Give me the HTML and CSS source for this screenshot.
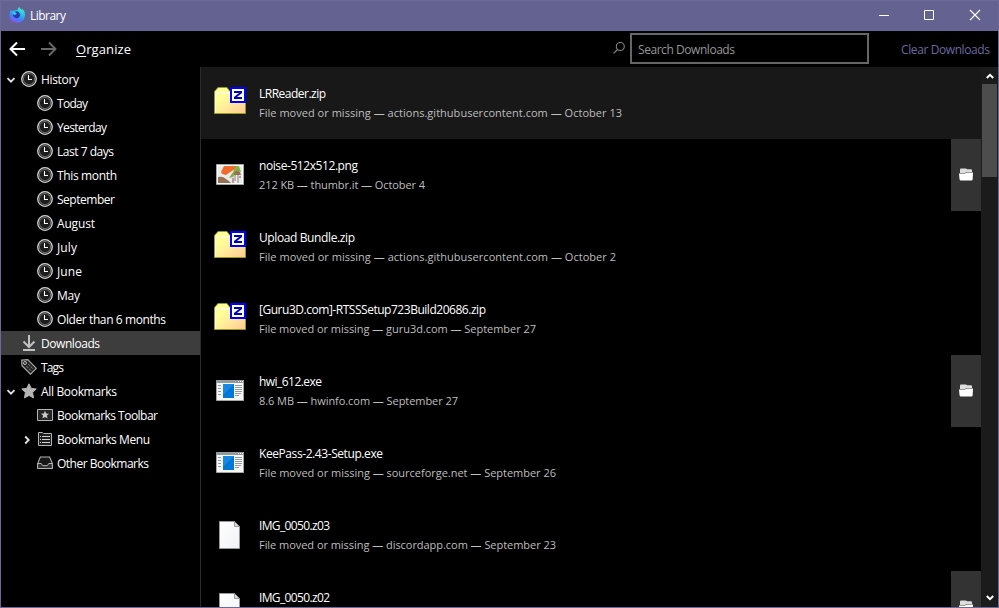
FILE: index.html
```html
<!DOCTYPE html>
<html lang="en">
<head>
<meta charset="utf-8">
<title>Library</title>
<link rel="stylesheet" href="styles.css">
</head>
<body>
<svg class="sprite" aria-hidden="true">
  <defs>
    <linearGradient id="fx" x1="0.8" y1="0" x2="0.3" y2="1"><stop offset="0" stop-color="#4df5b8"/><stop offset=".35" stop-color="#25c6ea"/><stop offset=".7" stop-color="#3b82ff"/><stop offset="1" stop-color="#a347f5"/></linearGradient>
    <linearGradient id="peach" x1="0" y1="0" x2="1" y2="1"><stop offset=".3" stop-color="#ffff98"/><stop offset=".75" stop-color="#ffdd9a"/><stop offset="1" stop-color="#ffc898"/></linearGradient>
    <linearGradient id="paper" x1="0" y1="0" x2="1" y2="1"><stop offset="0" stop-color="#fff"/><stop offset="1" stop-color="#f0f2f4"/></linearGradient>
  </defs>
  <symbol id="clock" viewBox="0 0 16 16"><circle cx="8" cy="8" r="7.3" fill="#1c1c1c" stroke="#d4d4d4" stroke-width="1.3"/><circle cx="8" cy="8" r="5.6" fill="none" stroke="#777" stroke-width=".9"/><path d="M7.5 4v4.5H11" fill="none" stroke="#fff" stroke-width="1.1"/></symbol>
  <symbol id="down" viewBox="0 0 16 16"><path d="M8 0v12M2.500 6.500l5.500 5.500 5.500-5.500M2 15h12" fill="none" stroke="#c2c2c2" stroke-width="2"/></symbol>
  <symbol id="tag" viewBox="0 0 16 16"><path d="M.7 1.2 6.8.7l8.500 8.6-5.8 5.9L1 6.8z" fill="#242424" stroke="#a8a8a8" stroke-width="1.2"/><circle cx="4" cy="4" r="1.5" fill="none" stroke="#b8b8b8"/><path d="m7.3 5.2 4.6 4.5M5.6 7.3l4.2 4.2" stroke="#999" stroke-width=".9" stroke-dasharray="2.5 1"/></symbol>
  <symbol id="star" viewBox="0 0 16 16"><path fill="#b5b5b5" stroke="#b5b5b5" stroke-linejoin="round" d="m8 .8 2.2 4.5 5 .7-3.6 3.5.9 5.4L8 12.400l-4.500 2.500.9-5.400L.8 6l5-.7z"/></symbol>
  <symbol id="toolbar" viewBox="0 0 16 16"><path fill="#242424" stroke="#b4b4b4" d="M.5 2.500h15v11H.5z"/><path fill="#c8c8c8" d="m8 3.8 1.2 2.6 2.9.3L9.9 8.6l.7 2.9L8 10l-2.6 1.5.7-2.9-2.2-1.9 2.9-.3z"/></symbol>
  <symbol id="menu" viewBox="0 0 16 16"><path fill="#202020" stroke="#b4b4b4" d="M1.5 1.5h4l1 1h8v12h-13z"/><path d="M3 5.5h1m1 0h8M3 8.5h1m1 0h8M3 11.5h1m1 0h8" stroke="#d0d0d0"/></symbol>
  <symbol id="tray" viewBox="0 0 16 16"><path d="M.7 8.4 3.4 2h9.2l2.7 6.4v5.1H.7z" fill="#171717" stroke="#b4b4b4" stroke-width="1.1"/><path d="M.7 8.5h3.5c.6 0 .7 2.2 1.7 2.2h4.2c1 0 1.1-2.2 1.7-2.2h3.5v5H.7z" fill="#303030" stroke="#b4b4b4"/></symbol>
  <symbol id="chev" viewBox="0 0 10 10"><path d="m1.5 3.2 3.5 3.5 3.5-3.5" fill="none" stroke="#e4e4e4" stroke-width="1.8"/></symbol>
  <symbol id="zip" viewBox="0 0 32 32"><path fill="url(#peach)" stroke="#989827" d="M.5 30.500V8.500L4 4.500h9l3 4h15.500v22z"/><path fill="#fff" d="M2 9h14v1H2zM1 10h1v20H1z"/><path fill="#00f" d="M16 4h16v16H16z"/><path fill="#fff" d="M18 6h12v12H18z"/><path fill="#0000c0" d="M20 8h8v2l-5 4h5v2h-8v-2l5-4h-5z"/></symbol>
  <symbol id="image" viewBox="0 0 28 21"><path fill="#fff" stroke="#a6a6a6" d="M.5.5h27v20H.5z"/><path fill="#e8ecea" d="M2 2h24v17H2z"/><path fill="#ef6c2d" d="M8 2h13l-2 3-3 2-3 2-3 2-4-1-1-2z"/><path fill="#83b347" d="M20 2h3l2 6-3-1-5 6-4 1 4-6z"/><path fill="#987052" d="M2 13q5-1 8 2 3 2 5 4H2zM18 9q2-4 6-1l1 3h-7z"/><path stroke="#b0a6a2" stroke-width="1.500" d="M19 11v6M22 11v8"/><path stroke="#a84047" d="M17 14v5M24 12v2"/></symbol>
  <symbol id="exe" viewBox="0 0 28 21"><path fill="#f7f7f7" stroke="#a6a6a6" d="M.5.5h27v20H.5z"/><path fill="#919a9e" d="M0 0h28v3H0z"/><path fill="#fff" d="M22 1h1v1h-1zm2 0h1v1h-1zm2 0h1v1h-1z"/><path fill="#0078d7" d="M7 4h11v14H7z"/><path fill="#1888e2" d="M7 4h11L7 15z"/><path d="M2 5.500h3M2 8.500h3M2 11.500h3M2 14.500h3M19 5.500h7M19 7.500h7M19 9.500h7M19 11.500h7M19 13.500h6M19 15.500h4" stroke="#929b9f"/></symbol>
  <symbol id="file" viewBox="0 0 21 28"><path fill="url(#paper)" stroke="#979a9c" d="M.5.500h15l5 5v22H.5z"/><path fill="#d8dcde" stroke="#979a9c" d="M15.500.5v5h5z"/></symbol>
  <symbol id="folder" viewBox="0 0 14 13"><path fill="#ddd" d="M1 4V1.500Q1 .5 2 .5h5l1 .8h4q1 0 1 1V4H7.500l-1.500.9H1z"/><path fill="#fff" d="M0 5.500h6L7.500 4.600H14l-.3 6.400q0 1.500-1.500 1.500H2Q.7 12.500.5 11z"/></symbol>
</svg>
<div class="window">
  <header class="titlebar">
    <svg class="logo" viewBox="0 0 16 16"><path fill="url(#fx)" d="M8.300 3Q9 1 10.200 0q1.300 2 2.800 3l.2-1.600Q16 4 16 8.300A7.800 7.600 0 0 1 .4 8Q.3 5 2 2.700L2.500 4 5 3.600z"/><path fill="#2e37a4" d="M5 5.200Q7.700 3 10 5.500q2 2.500.2 4.700Q7.800 12.500 5 10 3 7.800 5 5.200z"/><path fill="#35c7f2" d="M3.500 4.500 7 5.500Q8.500 6.600 7 7.500L5.200 8 4 7z"/></svg>
    <span class="title fit" data-w="36">Library</span>
    <svg class="controls" width="104" height="12" viewBox="0 0 104 12" fill="none" stroke="#fff"><path d="M0 6.500h10M45.500 1.500h9v9h-9z"/><path d="m91 1 10 10m0-10L91 11" stroke-width="1.200"/></svg>
  </header>
  <nav class="toolbar">
    <svg class="nav-arrow" viewBox="0 0 16 16"><path d="M16 8H1.500M8 1.500 1.500 8 8 14.500" fill="none" stroke="#fff" stroke-width="2"/></svg>
    <svg class="nav-arrow forward" viewBox="0 0 16 16"><path d="M0 8h14.500M8 1.500 14.500 8 8 14.500" fill="none" stroke="#686868" stroke-width="1.900"/></svg>
    <span class="organize fit" data-w="55"><u>O</u>rganize</span>
    <svg class="magnifier" viewBox="0 0 12 12"><circle cx="7.300" cy="4.500" r="4" fill="none" stroke="#868686" stroke-width="1.100"/><path d="M4.500 7.500.6 11.400" stroke="#868686" stroke-width="1.200"/></svg>
    <div class="search"><span class="fit" data-w="97">Search Downloads</span></div>
    <span class="clear fit" data-w="89">Clear Downloads</span>
  </nav>
  <main class="content">
    <aside class="tree">
      <div class="node"><svg class="twisty"><use href="#chev"/></svg><svg class="icon"><use href="#clock"/></svg><span class="fit" data-w="38">History</span></div>
      <div class="node child"><svg class="icon"><use href="#clock"/></svg><span class="fit" data-w="31">Today</span></div>
      <div class="node child"><svg class="icon"><use href="#clock"/></svg><span class="fit" data-w="50">Yesterday</span></div>
      <div class="node child"><svg class="icon"><use href="#clock"/></svg><span class="fit" data-w="57">Last 7 days</span></div>
      <div class="node child"><svg class="icon"><use href="#clock"/></svg><span class="fit" data-w="60">This month</span></div>
      <div class="node child"><svg class="icon"><use href="#clock"/></svg><span class="fit" data-w="58">September</span></div>
      <div class="node child"><svg class="icon"><use href="#clock"/></svg><span class="fit" data-w="38">August</span></div>
      <div class="node child"><svg class="icon"><use href="#clock"/></svg><span class="fit" data-w="20">July</span></div>
      <div class="node child"><svg class="icon"><use href="#clock"/></svg><span class="fit" data-w="25">June</span></div>
      <div class="node child"><svg class="icon"><use href="#clock"/></svg><span class="fit" data-w="23">May</span></div>
      <div class="node child"><svg class="icon"><use href="#clock"/></svg><span class="fit" data-w="109">Older than 6 months</span></div>
      <div class="node leaf selected"><svg class="icon"><use href="#down"/></svg><span class="fit" data-w="59">Downloads</span></div>
      <div class="node leaf"><svg class="icon"><use href="#tag"/></svg><span class="fit" data-w="23">Tags</span></div>
      <div class="node"><svg class="twisty"><use href="#chev"/></svg><svg class="icon"><use href="#star"/></svg><span class="fit" data-w="76">All Bookmarks</span></div>
      <div class="node child"><svg class="icon"><use href="#toolbar"/></svg><span class="fit" data-w="101">Bookmarks Toolbar</span></div>
      <div class="node nested"><svg class="twisty closed"><use href="#chev"/></svg><svg class="icon"><use href="#menu"/></svg><span class="fit" data-w="93">Bookmarks Menu</span></div>
      <div class="node child"><svg class="icon"><use href="#tray"/></svg><span class="fit" data-w="92">Other Bookmarks</span></div>
    </aside>
    <section class="downloads">
      <article class="item current"><svg class="type zip"><use href="#zip"/></svg><div class="info"><div class="name"><span class="fit" data-w="67">LRReader.zip</span></div><div class="meta"><span class="fit" data-w="363">File moved or missing — actions.githubusercontent.com — October 13</span></div></div></article>
      <article class="item"><svg class="type wide"><use href="#image"/></svg><div class="info"><div class="name"><span class="fit" data-w="99">noise-512x512.png</span></div><div class="meta"><span class="fit" data-w="166">212 KB — thumbr.it — October 4</span></div></div><div class="show"><svg><use href="#folder"/></svg></div></article>
      <article class="item"><svg class="type zip"><use href="#zip"/></svg><div class="info"><div class="name"><span class="fit" data-w="96">Upload Bundle.zip</span></div><div class="meta"><span class="fit" data-w="357">File moved or missing — actions.githubusercontent.com — October 2</span></div></div></article>
      <article class="item"><svg class="type zip"><use href="#zip"/></svg><div class="info"><div class="name"><span class="fit" data-w="227">[Guru3D.com]-RTSSSetup723Build20686.zip</span></div><div class="meta"><span class="fit" data-w="277">File moved or missing — guru3d.com — September 27</span></div></div></article>
      <article class="item"><svg class="type wide"><use href="#exe"/></svg><div class="info"><div class="name"><span class="fit" data-w="63">hwi_612.exe</span></div><div class="meta"><span class="fit" data-w="199">8.6 MB — hwinfo.com — September 27</span></div></div><div class="show"><svg><use href="#folder"/></svg></div></article>
      <article class="item"><svg class="type wide"><use href="#exe"/></svg><div class="info"><div class="name"><span class="fit" data-w="124">KeePass-2.43-Setup.exe</span></div><div class="meta"><span class="fit" data-w="297">File moved or missing — sourceforge.net — September 26</span></div></div></article>
      <article class="item"><svg class="type tall"><use href="#file"/></svg><div class="info"><div class="name"><span class="fit" data-w="71">IMG_0050.z03</span></div><div class="meta"><span class="fit" data-w="297">File moved or missing — discordapp.com — September 23</span></div></div></article>
      <article class="item"><svg class="type tall"><use href="#file"/></svg><div class="info"><div class="name"><span class="fit" data-w="71">IMG_0050.z02</span></div></div><div class="show"><svg><use href="#folder"/></svg></div></article>
    </section>
    <div class="scrollbar">
      <svg class="scroll-arrow" viewBox="0 0 8 6"><path d="M.8 5 4 1.800 7.200 5" fill="none" stroke="#fff" stroke-width="2"/></svg>
      <div class="thumb"></div>
      <svg class="scroll-arrow bottom" viewBox="0 0 8 6"><path d="M.8 1 4 4.200 7.200 1" fill="none" stroke="#fff" stroke-width="2"/></svg>
    </div>
  </main>
</div>
<script src="fit.js"></script>
</body>
</html>
```
FILE: styles.css
```css
* { box-sizing: border-box; }
body { margin: 0; background: #000; color: #fff; font: 12px/16px "Open Sans", "Noto Sans", sans-serif; }
svg { display: block; flex: none; }
.sprite { width: 0; height: 0; position: absolute; }
.window { width: 999px; height: 608px; border: 1px solid #6a6999; border-top: 0; display: flex; flex-direction: column; overflow: hidden; }
.fit { white-space: nowrap; }
.titlebar { flex: none; height: 31px; background: #636290; border-top: 1px solid #6d6c99; display: flex; align-items: center; padding: 0 15px 0 8px; }
.logo { width: 16px; height: 16px; margin-right: 5px; margin-top: -2px; }
.title { margin-top: -1px; }
.controls { margin-left: auto; margin-top: -2px; }
.toolbar { flex: none; height: 36px; display: flex; align-items: center; padding-left: 8px; }
.nav-arrow { width: 16px; height: 16px; }
.forward { margin-left: 16px; }
.organize { width: 55px; margin-left: 19px; font-size: 13px; }
.organize u { text-underline-offset: 2px; }
.magnifier { width: 12px; height: 12px; margin-left: 482px; margin-top: -2px; }
.search { width: 239px; height: 31px; margin-left: 5px; margin-top: -1px; border: 2px solid #676767; padding: 7px 6px 0; color: #969696; line-height: 15px; }
.clear { margin-left: 32px; margin-top: 1px; color: #6a69a0; }
.content { flex: 1; min-height: 0; display: flex; }
.tree { flex: none; width: 200px; border-right: 1px solid #2b2b2b; }
.node { height: 24px; display: flex; align-items: center; padding-left: 5px; }
.node .fit { margin-top: 2px; }
.node.child { padding-left: 36px; }
.node.leaf { padding-left: 20px; }
.node.nested { padding-left: 21px; }
.node.selected { background: #3d3d3d; }
.twisty { width: 10px; height: 10px; margin-right: 5px; margin-top: 2px; }
.twisty.closed { transform: rotate(-90deg); }
.icon { width: 16px; height: 16px; margin-right: 4px; }
.downloads { width: 780px; overflow: hidden; }
.item { height: 72px; display: flex; padding-left: 13px; }
.item.current { background: #181818; }
.type { margin-top: 16px; }
.zip { width: 32px; height: 32px; margin-right: 13px; }
.wide { width: 28px; height: 21px; margin: 25px 15px 0 2px; }
.tall { width: 21px; height: 28px; margin: 22px 19px 0 5px; }
.info { flex: 1; padding-top: 19px; }
.name { height: 16px; }
.meta { margin-top: 3px; height: 16px; font-size: 11px; color: #bebebe; }
.show { width: 30px; background: #333; display: flex; align-items: center; justify-content: center; }
.show svg { width: 14px; height: 13px; margin-top: -1px; }
.scrollbar { width: 17px; background: #1b1b1b; display: flex; flex-direction: column; align-items: center; }
.scroll-arrow { width: 8px; height: 6px; margin-top: 6px; }
.thumb { width: 15px; height: 93px; margin-top: 5px; background: #4d4d4d; }
.scroll-arrow.bottom { margin-top: auto; margin-bottom: 6px; }
```
FILE: fit.js
```js
document.querySelectorAll('.fit').forEach(function (el) {
  var range = document.createRange();
  range.selectNodeContents(el);
  var natural = range.getBoundingClientRect().width;
  el.style.letterSpacing = ((+el.dataset.w - natural) / (el.textContent.length - 1)) + 'px';
});
```
